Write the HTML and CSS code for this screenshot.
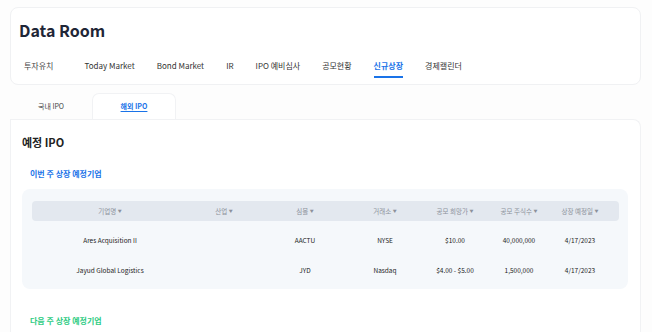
FILE: index.html
```html
<!DOCTYPE html>
<html>
	<head>
		<meta charset="utf-8">
		<link rel="stylesheet" href="styles.css">
		<title>Data Room</title>
	</head>
	<body>
		<div class="page">
			<div class="top-card">
				<h1>Data Room</h1>
				<div class="nav">
					<span class="nav-item muted">투자유치</span>
					<span class="nav-item">Today Market</span>
					<span class="nav-item">Bond Market</span>
					<span class="nav-item">IR</span>
					<span class="nav-item">IPO 예비심사</span>
					<span class="nav-item">공모현황</span>
					<span class="nav-item active">신규상장</span>
					<span class="nav-item">경제캘린더</span>
				</div>
			</div>

			<div class="subtabs">
				<div class="subtab">국내 IPO</div>
				<div class="subtab selected"><span>해외 IPO</span></div>
			</div>

			<div class="content">
				<h2>예정 IPO</h2>
				<div class="group-title blue">이번 주 상장 예정기업</div>
				<div class="panel">
					<div class="row head">
						<div>기업명 <span class="caret">▼</span></div>
						<div>산업 <span class="caret">▼</span></div>
						<div>심볼 <span class="caret">▼</span></div>
						<div>거래소 <span class="caret">▼</span></div>
						<div>공모 희망가 <span class="caret">▼</span></div>
						<div>공모 주식수 <span class="caret">▼</span></div>
						<div>상장 예정일 <span class="caret">▼</span></div>
					</div>
					<div class="row">
						<div>Ares Acquisition II</div>
						<div></div>
						<div>AACTU</div>
						<div>NYSE</div>
						<div>$10.00</div>
						<div>40,000,000</div>
						<div>4/17/2023</div>
					</div>
					<div class="row">
						<div>Jayud Global Logistics</div>
						<div></div>
						<div>JYD</div>
						<div>Nasdaq</div>
						<div>$4.00 - $5.00</div>
						<div>1,500,000</div>
						<div>4/17/2023</div>
					</div>
				</div>
				<div class="group-title green">다음 주 상장 예정기업</div>
			</div>
		</div>
	</body>
</html>
```
FILE: styles.css
```css
html, body {
	height: 100%;
	overflow: hidden;
}
html {
	font-family: "Noto Sans CJK KR", "Noto Sans", sans-serif;
	background-color: #fdfdfd;
	color: #222;
}
body {
	margin: 0;
}
.page {
	padding: 7px 11px 0 10px;
}
.top-card {
	background: #fff;
	border: 1px solid #f0f1f3;
	border-radius: 8px;
	height: 76px;
}
h1 {
	margin: 0;
	padding: 10px 0 0 8px;
	font-size: 16px;
	font-weight: 700;
	line-height: 24px;
	color: #1f2637;
}
.nav {
	display: flex;
	gap: 22px;
	padding: 16px 0 0 13px;
}
.nav-item {
	font-size: 8px;
	line-height: 16px;
	color: #333;
	border-bottom: 2px solid transparent;
	padding-bottom: 2px;
}
.nav-item.muted {
	color: #444;
	margin-right: 9px;
}
.nav-item.active {
	color: #1a73e8;
	font-weight: 700;
	border-bottom-color: #1a73e8;
}
.subtabs {
	display: flex;
	margin-top: 9px;
	height: 25px;
	align-items: flex-end;
}
.subtab {
	width: 82px;
	height: 25px;
	line-height: 24px;
	text-align: center;
	font-size: 7px;
	color: #444;
}
.subtab.selected {
	background: #fff;
	border: 1px solid #f1f2f4;
	border-bottom: none;
	border-radius: 7px 7px 0 0;
	color: #1a73e8;
	font-weight: 700;
}
.subtab.selected span {
	text-decoration: underline;
	text-underline-offset: 2px;
}
.content {
	background: #fff;
	border: 1px solid #f1f2f4;
	border-bottom: none;
	border-radius: 0 8px 0 0;
	padding: 12px 12px 0 11px;
	height: 200px;
}
h2 {
	margin: 0;
	font-size: 11px;
	line-height: 20px;
	font-weight: 700;
	color: #222;
}
.group-title {
	font-size: 8px;
	font-weight: 700;
	line-height: 14px;
	padding-left: 8px;
}
.group-title.blue {
	color: #1a73e8;
	margin-top: 15px;
}
.group-title.green {
	color: #2ecc83;
	margin-top: 25px;
}
.panel {
	margin-top: 8px;
	background: #f5f8fb;
	border-radius: 8px;
	padding: 12px 9px 4px 10px;
	height: 84px;
}
.row {
	display: grid;
	grid-template-columns: 156px 72px 90px 70px 70px 58px 64px;
	height: 30px;
	align-items: center;
	text-align: center;
	font-size: 6.5px;
	color: #222;
}
.row.head {
	height: 20px;
	background: #e3e8ef;
	border-radius: 4px;
	color: #8c919b;
	margin-bottom: 4px;
}
.caret {
	font-size: 4px;
	vertical-align: 1px;
}
```
